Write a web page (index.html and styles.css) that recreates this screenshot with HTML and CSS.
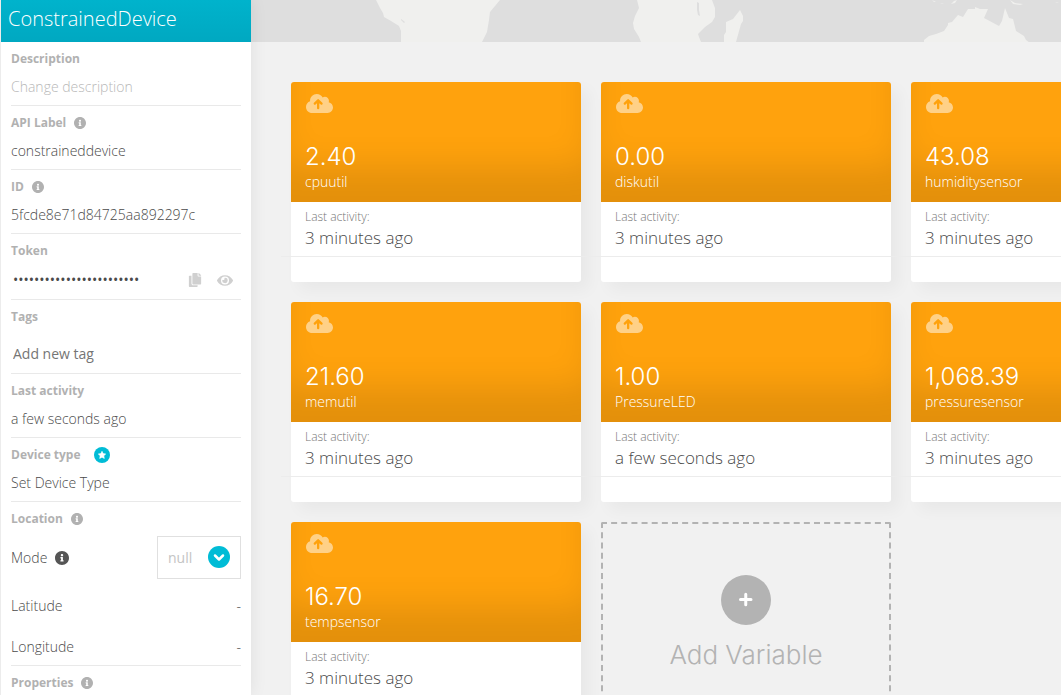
FILE: index.html
```html
<!DOCTYPE html>
<html lang="en">
<head>
<meta charset="utf-8">
<title>ConstrainedDevice</title>
<meta name="viewport" content="width=device-width, initial-scale=1">
<link rel="stylesheet" href="styles.css">
</head>
<body>
<svg class="sprite" aria-hidden="true">
  <symbol id="info" viewBox="8 8 496 496"><path d="M256 8C119.043 8 8 119.083 8 256c0 136.997 111.043 248 248 248s248-111.003 248-248C504 119.083 392.957 8 256 8zm0 110c23.196 0 42 18.804 42 42s-18.804 42-42 42-42-18.804-42-42 18.804-42 42-42zm56 254c0 6.627-5.373 12-12 12h-88c-6.627 0-12-5.373-12-12v-24c0-6.627 5.373-12 12-12h12v-64h-12c-6.627 0-12-5.373-12-12v-24c0-6.627 5.373-12 12-12h64c6.627 0 12 5.373 12 12v100h12c6.627 0 12 5.373 12 12v24z"/></symbol>
  <symbol id="copy" viewBox="0 0 448 512"><path d="M320 448v40c0 13.255-10.745 24-24 24H24c-13.255 0-24-10.745-24-24V120c0-13.255 10.745-24 24-24h72v296c0 30.879 25.121 56 56 56h168zm0-344V0H152c-13.255 0-24 10.745-24 24v368c0 13.255 10.745 24 24 24h272c13.255 0 24-10.745 24-24V128H344c-13.2 0-24-10.8-24-24zm120.971-31.029L375.029 7.029A24 24 0 0 0 358.059 0H352v96h96v-6.059a24 24 0 0 0-7.029-16.97z"/></symbol>
  <symbol id="eye" viewBox="0 64 576 384"><path d="M572.52 241.4C518.29 135.59 410.93 64 288 64S57.68 135.64 3.48 241.41a32.35 32.35 0 0 0 0 29.19C57.71 376.41 165.07 448 288 448s230.32-71.64 284.52-177.41a32.35 32.35 0 0 0 0-29.19zM288 400a144 144 0 1 1 144-144 143.93 143.93 0 0 1-144 144zm0-240a95.31 95.31 0 0 0-25.31 3.79 47.85 47.85 0 0 1-66.9 66.9A95.78 95.78 0 1 0 288 160z"/></symbol>
  <symbol id="star" viewBox="0 0 16 16"><circle cx="8" cy="8" r="8" fill="#00bcd6"/><path fill="#fff" stroke="#fff" stroke-width=".6" stroke-linejoin="round" d="M8 4.3l1.1 2.3 2.6.4-1.9 1.8.5 2.6L8 10.200l-2.300 1.200.5-2.600L4.300 7l2.600-.4z"/></symbol>
  <symbol id="cloud" viewBox="0 32 640 448"><path fill="#ffd187" d="M537.6 226.6c4.100-10.700 6.400-22.400 6.400-34.600 0-53-43-96-96-96-19.700 0-38.100 6-53.300 16.200C367 64.200 315.300 32 256 32c-88.400 0-160 71.600-160 160 0 2.700.1 5.400.2 8.100C40.200 219.800 0 273.200 0 336c0 79.500 64.500 144 144 144h368c70.700 0 128-57.300 128-128 0-61.900-44-113.600-102.400-125.400z"/><path fill="none" stroke="#ffa20d" stroke-width="54" stroke-linecap="round" stroke-linejoin="round" d="M288 368V185M208 258l80-80 80 80"/></symbol>
</svg>
<div class="app">
  <aside class="sidebar">
    <h1 class="title">ConstrainedDevice</h1>
    <form class="fields">
      <div class="field">
        <label class="label" for="description">Description</label>
        <input class="value input" id="description" type="text" placeholder="Change description">
      </div>
      <div class="field">
        <div class="label">API Label <svg class="info"><use href="#info"/></svg></div>
        <div class="value">constraineddevice</div>
      </div>
      <div class="field">
        <div class="label">ID <svg class="info"><use href="#info"/></svg></div>
        <div class="value">5fcde8e71d84725aa892297c</div>
      </div>
      <div class="field">
        <label class="label" for="token">Token</label>
        <div class="token">
          <input class="input secret" id="token" type="password" value="abcdefghijklmnopqrstuvwx" readonly>
          <button class="icon-button" type="button" aria-label="Copy token"><svg class="copy"><use href="#copy"/></svg></button>
          <button class="icon-button" type="button" aria-label="Show token"><svg class="eye"><use href="#eye"/></svg></button>
        </div>
      </div>
      <div class="field tags">
        <label class="label" for="tags">Tags</label>
        <input class="input tag-input" id="tags" type="text" placeholder="Add new tag">
      </div>
      <div class="field">
        <div class="label">Last activity</div>
        <div class="value">a few seconds ago</div>
      </div>
      <div class="field">
        <div class="label">Device type <svg class="star"><use href="#star"/></svg></div>
        <div class="value">Set Device Type</div>
      </div>
      <div class="field">
        <div class="label">Location <svg class="info"><use href="#info"/></svg></div>
        <div class="row mode">
          <label class="mode-label" for="mode">Mode <svg class="info dark"><use href="#info"/></svg></label>
          <span class="picker">
            <select id="mode"><option>null</option></select>
            <svg class="chevron" viewBox="0 0 22 22" aria-hidden="true"><circle cx="11" cy="11" r="11"/><path d="M7 9.500l4 4 4-4"/></svg>
          </span>
        </div>
        <div class="row coordinate"><span>Latitude</span><span>-</span></div>
        <div class="row coordinate"><span>Longitude</span><span>-</span></div>
      </div>
      <div class="field">
        <div class="label">Properties <svg class="info"><use href="#info"/></svg></div>
      </div>
    </form>
  </aside>
  <main class="main">
    <svg class="map" viewBox="251 0 810 42" preserveAspectRatio="xMinYMin slice" aria-hidden="true">
      <path d="M376 0l4 8 3 5 1 4 7 4 8 5 2 5v11h81L487 32 489 20 490 12 500 0z"/>
      <path class="lake" d="M401 19l4 3-1 1-3-3z"/>
      <path d="M637 0l2 8-4 8-2 7 1 6 5 8 2 5h60l-2-5-1-3 7-7 7-5 3-5V8l-3-8z"/>
      <path class="lake" d="M697 2l2 1v7l1 6-2-1-1-5z"/>
      <path d="M740 10l3 6v5l-2 3-5 18h-12v-7l2-3v-10l7-3z"/>
      <path d="M924 42v-2l5-4 7-2 8-3 4-6v-2l4-1 6-7 5 2 5-8 7 0 0-2 5 2 8 0-4 9 15 8 3-5 3-13 4 10 4 1 3 12 8 5 2 4 4 3z"/>
      <path d="M932 0l4 2-2 0zM940 3l4 1-2 0zM951 4l3-3 3-1-2 3zM1010 0l5 3 8 1-3 1-7-1zM1055 2l4 1-2 0z"/>
    </svg>
    <section class="grid">
      <article class="card">
        <div class="head"><svg class="cloud"><use href="#cloud"/></svg><div class="number">2.40</div><div class="name">cpuutil</div></div>
        <div class="body"><div class="caption">Last activity:</div><div class="when">3 minutes ago</div></div>
        <div class="foot"></div>
      </article>
      <article class="card">
        <div class="head"><svg class="cloud"><use href="#cloud"/></svg><div class="number">0.00</div><div class="name">diskutil</div></div>
        <div class="body"><div class="caption">Last activity:</div><div class="when">3 minutes ago</div></div>
        <div class="foot"></div>
      </article>
      <article class="card">
        <div class="head"><svg class="cloud"><use href="#cloud"/></svg><div class="number">43.08</div><div class="name">humiditysensor</div></div>
        <div class="body"><div class="caption">Last activity:</div><div class="when">3 minutes ago</div></div>
        <div class="foot"></div>
      </article>
      <article class="card">
        <div class="head"><svg class="cloud"><use href="#cloud"/></svg><div class="number">21.60</div><div class="name">memutil</div></div>
        <div class="body"><div class="caption">Last activity:</div><div class="when">3 minutes ago</div></div>
        <div class="foot"></div>
      </article>
      <article class="card">
        <div class="head"><svg class="cloud"><use href="#cloud"/></svg><div class="number">1.00</div><div class="name">PressureLED</div></div>
        <div class="body"><div class="caption">Last activity:</div><div class="when">a few seconds ago</div></div>
        <div class="foot"></div>
      </article>
      <article class="card">
        <div class="head"><svg class="cloud"><use href="#cloud"/></svg><div class="number">1,068.39</div><div class="name">pressuresensor</div></div>
        <div class="body"><div class="caption">Last activity:</div><div class="when">3 minutes ago</div></div>
        <div class="foot"></div>
      </article>
      <article class="card">
        <div class="head"><svg class="cloud"><use href="#cloud"/></svg><div class="number">16.70</div><div class="name">tempsensor</div></div>
        <div class="body"><div class="caption">Last activity:</div><div class="when">3 minutes ago</div></div>
        <div class="foot"></div>
      </article>
      <button class="add" type="button">
        <svg class="plus" viewBox="0 0 50 50" aria-hidden="true"><circle cx="25" cy="25" r="25"/><path d="M19.500 24.500h10.500M24.750 19.250v10.500"/></svg>
        <span>Add Variable</span>
      </button>
    </section>
  </main>
</div>
</body>
</html>
```
FILE: styles.css
```css
* { box-sizing: border-box; }

body {
  margin: 0;
  background: #f1f1f1;
  color: #4a4a4a;
  font: 300 14px/22px "Open Sans", "Noto Sans", sans-serif;
}

button, input, select {
  margin: 0;
  padding: 0;
  border: 0;
  background: none;
  color: inherit;
  font: inherit;
}

svg { display: block; fill: currentColor; }
.sprite { position: absolute; width: 0; height: 0; }

.app { display: flex; height: 100vh; overflow: hidden; }

/* Sidebar */
.sidebar {
  position: relative;
  z-index: 1;
  flex: none;
  width: 251px;
  border-left: 1px solid #ececec;
  background: #fff;
  box-shadow: 0 0 16px rgba(0, 0, 0, .08);
}

.title {
  margin: 0;
  padding: 5px 7px 9px;
  background: linear-gradient(#00b3cc, #00a8c1);
  color: #fff;
  font-size: 20px;
  font-weight: 300;
  line-height: 28px;
}

.fields { padding: 0 10px; }
.field { padding: 9px 0 7px; border-bottom: 1px solid #e9e9e9; }

.label {
  display: flex;
  align-items: center;
  gap: 8px;
  height: 16px;
  margin-bottom: 9px;
  color: #b1b1b1;
  font-size: 12px;
  font-weight: 700;
  line-height: 16px;
}

.value { display: block; }
.input { width: 100%; height: 22px; outline: 0; }
.input::placeholder { color: #b8b8b8; opacity: 1; }

.info { width: 12px; height: 12px; }
.dark { width: 14px; height: 14px; color: #555; }
.star { width: 16px; height: 16px; margin-left: 5px; }

.token { display: flex; align-items: center; gap: 15px; height: 24px; padding-right: 8px; }
.secret { flex: 1; min-width: 0; padding-left: 2px; font-weight: 400; }
.icon-button { color: #d0d0d0; }
.copy { width: 14px; height: 14px; }
.eye { width: 16px; height: 11px; }

.tags { padding-bottom: 0; }
.tag-input { height: 39px; padding-left: 2px; font-weight: 400; }
.tag-input::placeholder { color: #757575; }

.row { display: flex; align-items: center; justify-content: space-between; }
.mode { margin-bottom: 16px; }
.mode-label { display: flex; align-items: center; gap: 8px; }
.coordinate + .coordinate { margin-top: 19px; }

.picker { position: relative; width: 84px; }
.picker select {
  width: 100%;
  height: 43px;
  padding: 0 10px;
  border: 1px solid #e0e0e0;
  appearance: none;
  color: #c4c4c4;
  font-weight: 400;
}
.chevron {
  position: absolute;
  top: 10px;
  right: 11px;
  width: 22px;
  height: 22px;
  pointer-events: none;
  fill: #00bcd6;
}
.chevron path { fill: none; stroke: #fff; stroke-width: 2.500; stroke-linecap: round; stroke-linejoin: round; }

/* Dashboard */
.main { flex: 1; min-width: 0; overflow: hidden; }
.map { width: 100%; height: 42px; background: #dedede; fill: #f0f0ee; }
.map .lake { fill: #dedede; }

.grid { display: grid; grid-template-columns: repeat(3, 290px); gap: 20px; padding: 40px; }

.card { border-radius: 3px; background: #fff; box-shadow: 8px 8px 16px rgba(0, 0, 0, .04); }

.head {
  display: flex;
  flex-direction: column;
  height: 120px;
  padding: 12px 14px 10px;
  border-radius: 3px 3px 0 0;
  background: #ffa20d;
  box-shadow: inset 0 -45px 35px -10px rgba(0, 0, 0, .11);
  color: #fff;
}
.cloud { width: 27px; height: 19px; margin: 0 1px; }
.number { margin-top: auto; font: 300 24px/30px Inter, sans-serif; }
.name { line-height: 20px; }

.body { padding: 7px 14px; }
.caption { margin-bottom: 2px; color: #777; font-size: 12px; line-height: 16px; }
.when { font-size: 17px; }
.foot { height: 26px; margin: 0 -10px; border-top: 1px solid #ececec; }

.add {
  display: flex;
  flex-direction: column;
  align-items: center;
  justify-content: center;
  gap: 15px;
  min-height: 200px;
  border: 2px dashed #b3b3b3;
  border-radius: 2px;
  color: #b3b3b3;
  font: 300 26px/30px Inter, sans-serif;
}
.plus { width: 50px; height: 50px; }
.plus path { fill: none; stroke: #fff; stroke-width: 3; stroke-linecap: round; }
```
